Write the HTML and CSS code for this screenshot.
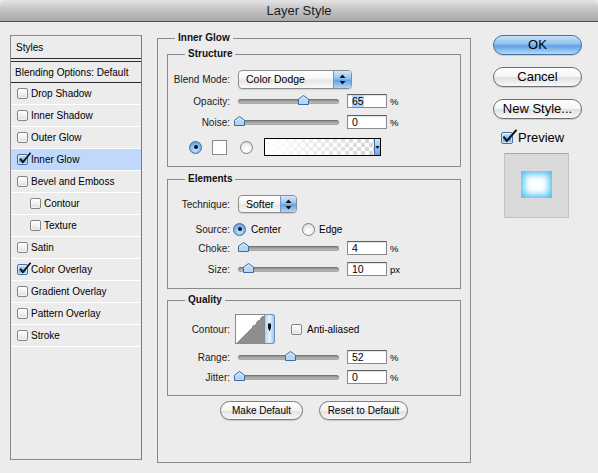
FILE: index.html
```html
<!DOCTYPE html>
<html>
<head>
<meta charset="utf-8">
<title>Layer Style</title>
<link rel="stylesheet" href="styles.css">
</head>
<body>
<div class="titlebar">Layer Style</div>
<div class="main">
  <div class="styles">
    <div class="item head">Styles</div>
    <div class="item blend">Blending Options: Default</div>
    <div class="item"><span class="cb"></span>Drop Shadow</div>
    <div class="item"><span class="cb"></span>Inner Shadow</div>
    <div class="item"><span class="cb"></span>Outer Glow</div>
    <div class="item sel"><span class="cb on"><svg class="tick" width="14" height="13" viewBox="0 0 14 13"><path d="M2.2 6.6 L4.8 10.2 L12.6 0.8" fill="none" stroke="#111" stroke-width="1.8"/></svg></span>Inner Glow</div>
    <div class="item"><span class="cb"></span>Bevel and Emboss</div>
    <div class="item sub"><span class="cb"></span>Contour</div>
    <div class="item sub"><span class="cb"></span>Texture</div>
    <div class="item"><span class="cb"></span>Satin</div>
    <div class="item"><span class="cb on"><svg class="tick" width="14" height="13" viewBox="0 0 14 13"><path d="M2.2 6.6 L4.8 10.2 L12.6 0.8" fill="none" stroke="#111" stroke-width="1.8"/></svg></span>Color Overlay</div>
    <div class="item"><span class="cb"></span>Gradient Overlay</div>
    <div class="item"><span class="cb"></span>Pattern Overlay</div>
    <div class="item"><span class="cb"></span>Stroke</div>
  </div>

  <div class="outer">
    <div class="gtitle">Inner Glow</div>

    <div class="group structure">
      <div class="gtitle">Structure</div>
      <div class="row r-blend">
        <span class="lbl">Blend Mode:</span>
        <div class="popup blendpop"><span class="val">Color Dodge</span><span class="arrows"><svg width="7" height="11" viewBox="0 0 7 11"><path d="M3.5 0.5 L6.5 4 L0.5 4 Z M0.5 7 L6.5 7 L3.5 10.5 Z" fill="#111"/></svg></span></div>
      </div>
      <div class="row r-opacity">
        <span class="lbl">Opacity:</span>
        <div class="slider"><span class="thumb" style="left:60px"><svg width="11" height="10" viewBox="0 0 11 10"><path d="M5.5 0.5 L10.5 4.2 L10.5 9.5 L0.5 9.5 L0.5 4.2 Z" fill="#b6d6f5" stroke="#3b6a9e"/><path d="M1.5 5 L5.5 2 L9.5 5" fill="none" stroke="#e8f3fd"/></svg></span></div>
        <div class="num"><span class="hl">65</span></div><span class="unit">%</span>
      </div>
      <div class="row r-noise">
        <span class="lbl">Noise:</span>
        <div class="slider"><span class="thumb" style="left:-4px"><svg width="11" height="10" viewBox="0 0 11 10"><path d="M5.5 0.5 L10.5 4.2 L10.5 9.5 L0.5 9.5 L0.5 4.2 Z" fill="#b6d6f5" stroke="#3b6a9e"/><path d="M1.5 5 L5.5 2 L9.5 5" fill="none" stroke="#e8f3fd"/></svg></span></div>
        <div class="num">0</div><span class="unit">%</span>
      </div>
      <div class="row r-color">
        <span class="radio on"></span>
        <span class="swatch"></span>
        <span class="radio r2"></span>
        <div class="grad"><span class="gfill"></span><span class="gdrop"><svg width="5" height="5" viewBox="0 0 5 5"><path d="M0.5 1 L4.5 1 L2.5 4 Z" fill="#111"/></svg></span></div>
      </div>
    </div>

    <div class="group elements">
      <div class="gtitle">Elements</div>
      <div class="row r-tech">
        <span class="lbl">Technique:</span>
        <div class="popup techpop"><span class="val">Softer</span><span class="arrows"><svg width="7" height="11" viewBox="0 0 7 11"><path d="M3.5 0.5 L6.5 4 L0.5 4 Z M0.5 7 L6.5 7 L3.5 10.5 Z" fill="#111"/></svg></span></div>
      </div>
      <div class="row r-src">
        <span class="lbl">Source:</span>
        <span class="radio on"></span><span class="rtext">Center</span>
        <span class="radio edge"></span><span class="rtext">Edge</span>
      </div>
      <div class="row r-choke">
        <span class="lbl">Choke:</span>
        <div class="slider"><span class="thumb" style="left:0px"><svg width="11" height="10" viewBox="0 0 11 10"><path d="M5.5 0.5 L10.5 4.2 L10.5 9.5 L0.5 9.5 L0.5 4.2 Z" fill="#b6d6f5" stroke="#3b6a9e"/><path d="M1.5 5 L5.5 2 L9.5 5" fill="none" stroke="#e8f3fd"/></svg></span></div>
        <div class="num">4</div><span class="unit">%</span>
      </div>
      <div class="row r-size">
        <span class="lbl">Size:</span>
        <div class="slider"><span class="thumb" style="left:5px"><svg width="11" height="10" viewBox="0 0 11 10"><path d="M5.5 0.5 L10.5 4.2 L10.5 9.5 L0.5 9.5 L0.5 4.2 Z" fill="#b6d6f5" stroke="#3b6a9e"/><path d="M1.5 5 L5.5 2 L9.5 5" fill="none" stroke="#e8f3fd"/></svg></span></div>
        <div class="num">10</div><span class="unit">px</span>
      </div>
    </div>

    <div class="group quality">
      <div class="gtitle">Quality</div>
      <div class="row r-contour">
        <span class="lbl">Contour:</span>
        <div class="contour"><span class="cprev"></span><span class="cdrop"><svg width="5" height="9" viewBox="0 0 5 9"><path d="M1 0.5 L4 0.5 L4 5 L2.5 8.5 L1 5 Z" fill="#111"/></svg></span></div>
        <span class="cb aa"></span><span class="aatext">Anti-aliased</span>
      </div>
      <div class="row r-range">
        <span class="lbl">Range:</span>
        <div class="slider"><span class="thumb" style="left:47px"><svg width="11" height="10" viewBox="0 0 11 10"><path d="M5.5 0.5 L10.5 4.2 L10.5 9.5 L0.5 9.5 L0.5 4.2 Z" fill="#b6d6f5" stroke="#3b6a9e"/><path d="M1.5 5 L5.5 2 L9.5 5" fill="none" stroke="#e8f3fd"/></svg></span></div>
        <div class="num">52</div><span class="unit">%</span>
      </div>
      <div class="row r-jitter">
        <span class="lbl">Jitter:</span>
        <div class="slider"><span class="thumb" style="left:-4px"><svg width="11" height="10" viewBox="0 0 11 10"><path d="M5.5 0.5 L10.5 4.2 L10.5 9.5 L0.5 9.5 L0.5 4.2 Z" fill="#b6d6f5" stroke="#3b6a9e"/><path d="M1.5 5 L5.5 2 L9.5 5" fill="none" stroke="#e8f3fd"/></svg></span></div>
        <div class="num">0</div><span class="unit">%</span>
      </div>
    </div>

    <div class="btns">
      <div class="pbtn mk">Make Default</div>
      <div class="pbtn rs">Reset to Default</div>
    </div>
  </div>

  <div class="side">
    <div class="abtn ok">OK</div>
    <div class="abtn">Cancel</div>
    <div class="abtn">New Style...</div>
    <div class="prev-row">
      <span class="cb big on"><svg class="tick" width="17" height="15" viewBox="0 0 17 15"><path d="M2.5 7.5 L5.8 12 L15.5 0.8" fill="none" stroke="#111" stroke-width="2"/></svg></span>
      <span class="prevtext">Preview</span>
    </div>
    <div class="preview"><span class="glow"></span></div>
  </div>
</div>
</body>
</html>
```

FILE: styles.css
```css
* { box-sizing: border-box; }
html, body { margin: 0; padding: 0; }
body {
  width: 598px;
  height: 473px;
  overflow: hidden;
  background: #ececec;
  font-family: "Liberation Sans", Arial, sans-serif;
  font-size: 10px;
  color: #000;
}

.titlebar {
  height: 22px;
  border-radius: 5px 5px 0 0;
  background: linear-gradient(#e4e4e4, #c4c4c4 45%, #a9a9a9);
  border-bottom: 1px solid #4e4e4e;
  text-align: center;
  font-size: 13px;
  line-height: 22px;
  color: #1c1c1c;
}

.main {
  display: flex;
  align-items: flex-start;
  padding-left: 10px;
}

/* ---------- styles list ---------- */
.styles {
  margin-top: 13px;
  width: 132px;
  height: 425px;
  border: 1px solid #8a8a8a;
  border-right-color: #7a7a7a;
}
.item {
  height: 22px;
  display: flex;
  align-items: center;
  padding-left: 6px;
  border-bottom: 1px solid #fff;
  white-space: nowrap;
}
.item.head {
  height: 23px;
  padding-left: 5px;
  border-bottom: 1px solid #2b2b2b;
}
.item.blend {
  margin-top: 2px;
  padding-left: 4px;
  border-top: 1px solid #2b2b2b;
  border-bottom: 1px solid #2b2b2b;
}
.item.sub { padding-left: 19px; }
.item.sel { background: #bfd8fb; }

.cb {
  position: relative;
  flex: none;
  width: 11px;
  height: 11px;
  margin-right: 3px;
  border: 1px solid #858585;
  border-radius: 2px;
  background: linear-gradient(#ffffff, #f1f1f1 50%, #dcdcdc);
  box-shadow: inset 0 0 0 1px rgba(255,255,255,0.6);
}
.cb.on {
  border-color: #44709f;
  background: linear-gradient(#d3e8fb, #8fc0ee 45%, #5a9be0 55%, #a8d2f6);
}
.cb .tick {
  position: absolute;
  left: 0;
  top: -3px;
}
.cb.big {
  width: 12px;
  height: 12px;
  margin: 0 5px 0 8px;
}
.cb.big .tick { left: -1px; top: -4px; }

/* ---------- middle ---------- */
.outer {
  margin-left: 15px;
  margin-top: 16px;
  width: 314px;
  height: 425px;
  border: 1px solid #8a8a8a;
}
.gtitle {
  width: max-content;
  height: 12px;
  line-height: 12px;
  margin: -7px 0 0 17px;
  padding: 0 3px;
  background: #ececec;
  font-weight: bold;
  color: #111;
}
.group {
  margin: 10px 9px 0;
  border: 1px solid #8a8a8a;
}
.elements { margin-top: 12px; }
.quality { margin-top: 11px; }

.row {
  display: flex;
  align-items: center;
  height: 16px;
  white-space: nowrap;
}
.lbl {
  flex: none;
  width: 62px;
  margin-right: 8px;
  text-align: right;
  color: #1a1a1a;
}

.structure { padding-bottom: 10px; }
.r-blend { height: 20px; margin-top: 9px; }
.r-opacity { margin-top: 4px; }
.r-noise { margin-top: 5px; }
.r-color { height: 18px; margin-top: 8px; padding-left: 21px; }

.elements { padding-bottom: 11px; }
.r-tech { height: 18px; margin-top: 10px; }
.r-src { margin-top: 8px; }
.r-choke { margin-top: 3px; }
.r-size { margin-top: 5px; }

.quality { padding-bottom: 10px; }
.r-contour { height: 30px; margin-top: 8px; }
.r-range { margin-top: 5px; }
.r-jitter { margin-top: 4px; }

/* popup */
.popup {
  display: flex;
  align-items: stretch;
  height: 19px;
  border: 1px solid #8c8c8c;
  border-radius: 4px;
  overflow: hidden;
  background: linear-gradient(#ffffff, #f6f6f6 45%, #e6e6e6 55%, #fafafa);
  font-size: 10.5px;
  box-shadow: 0 1px 1px rgba(0,0,0,0.12);
}
.popup .val {
  flex: 1;
  padding-left: 7px;
  line-height: 17px;
}
.popup .arrows {
  display: flex;
  align-items: center;
  justify-content: center;
  border-left: 1px solid #7b95b8;
  background: linear-gradient(#d3e8fb, #93c3f0 45%, #62a2e3 55%, #b2d8f8);
}
.blendpop { width: 114px; }
.blendpop .arrows { width: 18px; }
.techpop { width: 59px; height: 18px; }
.techpop .arrows { width: 16px; }
.techpop .val { line-height: 16px; }

/* slider */
.slider {
  position: relative;
  flex: none;
  width: 101px;
  height: 5px;
  border-radius: 3px;
  background: linear-gradient(#7e7e7e, #a6a6a6 50%, #c8c8c8);
  box-shadow: inset 0 0 0 1px rgba(0,0,0,0.12);
}
.thumb {
  position: absolute;
  top: -4px;
  width: 11px;
  height: 10px;
}
.thumb svg { display: block; }

.num {
  flex: none;
  margin-left: 8px;
  width: 40px;
  height: 14px;
  padding-left: 4px;
  border: 1px solid #8a8a8a;
  border-top-color: #5e5e5e;
  background: #fff;
  box-shadow: inset 0 1px 1px rgba(0,0,0,0.12);
  font-size: 10.5px;
  line-height: 12px;
}
.hl { background: #b5d4fb; }
.unit { margin-left: 3px; font-size: 9.5px; }

/* radios */
.radio {
  position: relative;
  flex: none;
  width: 13px;
  height: 13px;
  border: 1px solid #818181;
  border-radius: 50%;
  background: radial-gradient(circle at 50% 70%, #ffffff, #f0f0f0 50%, #cfcfcf);
}
.radio.on {
  border-color: #3f6c9e;
  background: radial-gradient(circle at 50% 70%, #c6e3fc, #84b9ec 55%, #4f8fd6);
}
.radio.on::after {
  content: "";
  position: absolute;
  left: 3.5px;
  top: 3.5px;
  width: 4px;
  height: 4px;
  border-radius: 50%;
  background: #111;
}
.swatch {
  flex: none;
  width: 15px;
  height: 15px;
  margin-left: 10px;
  border: 1px solid #8a8a8a;
  background: #fff;
}
.radio.r2 { margin-left: 13px; }
.grad {
  display: flex;
  flex: none;
  width: 117px;
  height: 18px;
  margin-left: 11px;
  border: 1px solid #000;
}
.gfill {
  flex: 1;
  background:
    linear-gradient(to right, #ffffff 0%, rgba(255,255,255,0) 100%),
    repeating-conic-gradient(#d4d4d4 0 25%, #ffffff 0 50%) 0 0 / 8px 8px;
}
.gdrop {
  width: 6px;
  display: flex;
  align-items: center;
  justify-content: center;
  border-left: 1px solid #4d6d96;
  background: linear-gradient(#cfe6fb, #6aa8e6);
}

.r-src .lbl { margin-right: 3px; }
.rtext { margin-left: 5px; }
.radio.edge { margin-left: 21px; }
.radio.edge + .rtext { margin-left: 4px; }

/* contour */
.r-contour .lbl { margin-right: 5px; }
.contour {
  display: flex;
  flex: none;
  height: 30px;
}
.cprev {
  width: 30px;
  height: 30px;
  border: 1px solid #8a8a8a;
  background: linear-gradient(to bottom right, #ffffff 50%, #8e8e8e 50%);
}
.cdrop {
  width: 10px;
  height: 30px;
  display: flex;
  justify-content: center;
  padding-top: 8px;
  border: 1px solid #6f8db5;
  border-left: none;
  border-radius: 0 3px 3px 0;
  background: linear-gradient(to right, #a9d2f6, #e6f2fd 50%, #9cc9f2);
}
.cb.aa { margin-left: 16px; margin-right: 5px; }

/* bottom buttons */
.btns {
  display: flex;
  justify-content: center;
  gap: 16px;
  margin-top: 5px;
}
.pbtn {
  height: 19px;
  border: 1px solid #7c7c7c;
  border-radius: 10px;
  background: linear-gradient(#ffffff, #f3f3f3 50%, #e2e2e2 52%, #f7f7f7);
  box-shadow: 0 1px 1px rgba(0,0,0,0.15);
  text-align: center;
  line-height: 17px;
  font-size: 10px;
}
.pbtn.mk { width: 83px; }
.pbtn.rs { width: 89px; }

/* right column */
.side {
  display: flex;
  flex-direction: column;
  margin-left: 22px;
  margin-top: 13px;
  width: 89px;
}
.abtn {
  height: 20px;
  margin-bottom: 12px;
  border: 1px solid #707070;
  border-radius: 10px;
  background: linear-gradient(#ffffff, #f4f4f4 50%, #e0e0e0 52%, #f8f8f8);
  box-shadow: 0 1px 1px rgba(0,0,0,0.15);
  text-align: center;
  font-size: 13px;
  line-height: 18px;
  white-space: nowrap;
}
.abtn.ok {
  border-color: #48709f;
  background: linear-gradient(#c9e3fb, #8dc0f0 45%, #5e9fe4 55%, #b5dbfa);
}
.prev-row {
  display: flex;
  align-items: center;
  height: 13px;
}
.prevtext { font-size: 13px; }
.preview {
  margin: 9px 0 0 11px;
  width: 65px;
  height: 65px;
  border: 1px solid #c2c2c2;
  border-top-color: #a8a8a8;
  background: #d9d9d9;
  display: flex;
  justify-content: center;
  padding-top: 17px;
}
.glow {
  width: 31px;
  height: 27px;
  background: #fff;
  box-shadow: inset 0 0 7px 3px #45c0f2;
}
```
